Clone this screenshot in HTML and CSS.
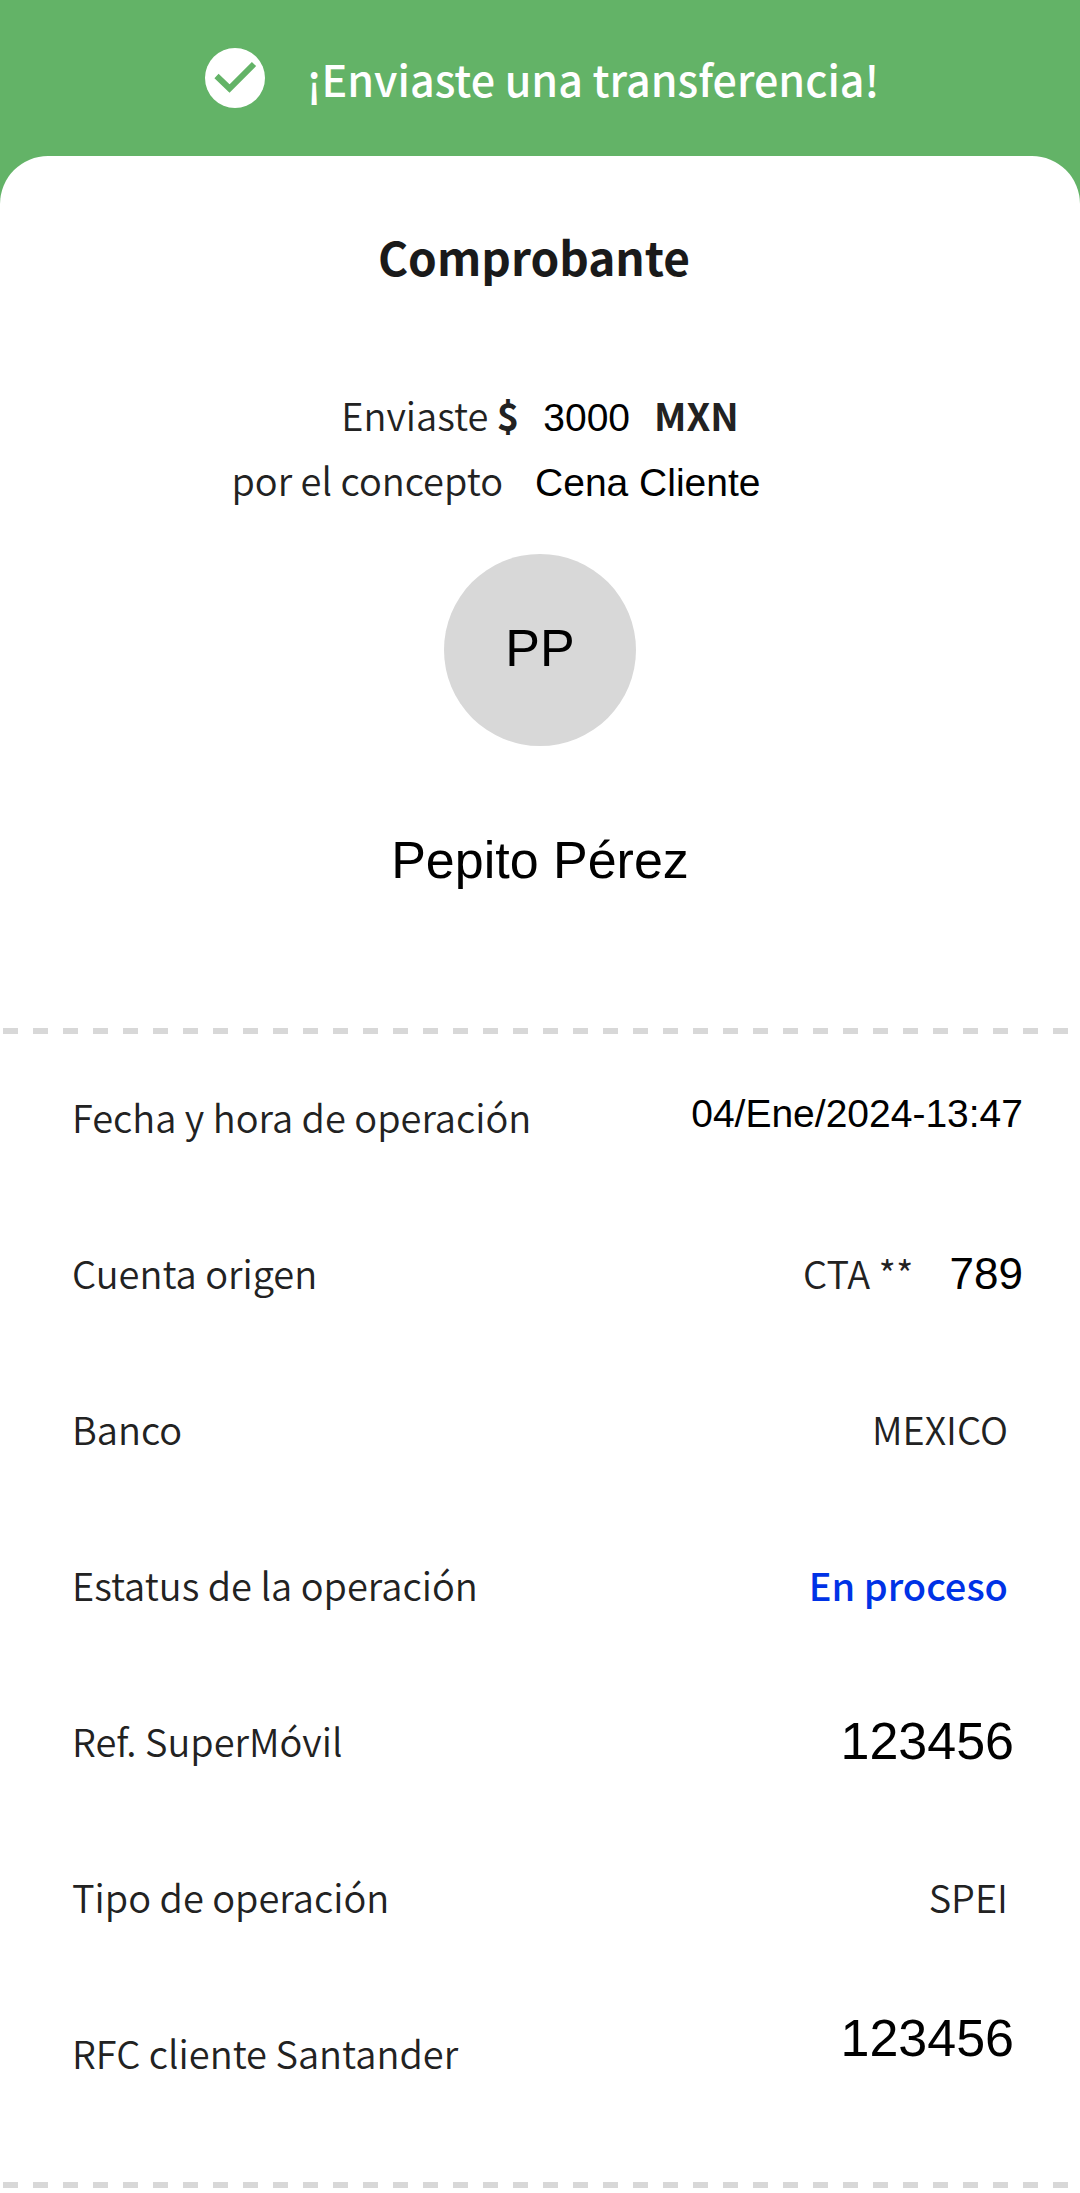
FILE: index.html
```html
<!DOCTYPE html>
<html lang="es">
<head>
  <meta charset="utf-8">
  <meta name="viewport" content="width=device-width, initial-scale=1">
  <title>Comprobante</title>
  <link rel="stylesheet" href="styles.css">
</head>
<body>
  <header class="banner">
    <svg class="banner-icon" viewBox="0 0 60 60" aria-hidden="true">
      <circle cx="30" cy="30" r="30" fill="#fff"/>
      <path d="M11.500 28L24.500 40.500L49 16" fill="none" stroke="#63b367" stroke-width="6"/>
    </svg>
    <p class="banner-text">¡Enviaste una transferencia!</p>
  </header>

  <main class="receipt">
    <h1 class="title">Comprobante</h1>

    <section class="summary">
      <p class="summary-line">
        <span>Enviaste <strong>$</strong></span>
        <span class="entry">3000</span>
        <strong>MXN</strong>
      </p>
      <p class="summary-line summary-concept">
        <span>por el concepto</span>
        <span class="entry">Cena Cliente</span>
      </p>
      <div class="avatar">PP</div>
      <p class="recipient">Pepito Pérez</p>
    </section>

    <hr class="divider">

    <dl class="details">
      <div class="row">
        <dt>Fecha y hora de operación</dt>
        <dd class="entry entry-raised">04/Ene/2024-13:47</dd>
      </div>
      <div class="row">
        <dt>Cuenta origen</dt>
        <dd class="account"><span>CTA **</span><span class="entry entry-medium">789</span></dd>
      </div>
      <div class="row">
        <dt>Banco</dt>
        <dd>MEXICO</dd>
      </div>
      <div class="row">
        <dt>Estatus de la operación</dt>
        <dd class="status">En proceso</dd>
      </div>
      <div class="row">
        <dt>Ref. SuperMóvil</dt>
        <dd class="entry entry-large">123456</dd>
      </div>
      <div class="row">
        <dt>Tipo de operación</dt>
        <dd>SPEI</dd>
      </div>
      <div class="row row-last">
        <dt>RFC cliente Santander</dt>
        <dd class="entry entry-large">123456</dd>
      </div>
    </dl>

    <hr class="divider">
  </main>
</body>
</html>
```
FILE: styles.css
```css
:root {
  --green: #63b367;
  --ink: #222;
  --grey: #d8d8d8;
  --blue: #0032e6;
}

* {
  box-sizing: border-box;
}

body {
  display: flex;
  flex-direction: column;
  min-height: 100vh;
  margin: 0;
  background: var(--green);
  color: var(--ink);
  font-family: "Noto Sans CJK SC", "Noto Sans", sans-serif;
  font-size: 38px;
  font-weight: 350;
  line-height: 62px;
}

h1, p, dl, dd {
  margin: 0;
}

strong {
  font-weight: 700;
}

.banner {
  display: flex;
  align-items: center;
  justify-content: center;
  gap: 42px;
  min-height: 156px;
  padding-left: 4px;
}

.banner-icon {
  width: 60px;
  height: 60px;
}

.banner-text {
  color: #fff;
  font-size: 43px;
  font-weight: 500;
}

.receipt {
  flex: 1;
  padding: 68px 0 2px;
  border-radius: 48px 48px 0 0;
  background: #fff;
}

.title {
  padding-right: 12px;
  color: #1a1a1a;
  font-size: 46px;
  font-weight: 700;
  line-height: 64px;
  text-align: center;
}

.summary {
  display: flex;
  flex-direction: column;
  align-items: center;
  margin-top: 96px;
}

.summary-line {
  display: flex;
  align-items: baseline;
  gap: 24px;
}

.summary-concept {
  gap: 32px;
  margin-right: 88px;
}

.entry {
  color: #000;
  font-family: "Liberation Sans", Arial, sans-serif;
  font-size: 39px;
  font-weight: 400;
}

.avatar {
  display: grid;
  place-items: center;
  width: 192px;
  height: 192px;
  margin-top: 40px;
  padding-bottom: 4px;
  border-radius: 50%;
  background: var(--grey);
  color: #000;
  font: 400 52px/64px "Liberation Sans", Arial, sans-serif;
}

.recipient {
  margin-top: 82px;
  color: #000;
  font: 400 52px/64px "Liberation Sans", Arial, sans-serif;
}

.divider {
  height: 6px;
  margin: 136px 0 0;
  border: 0;
  background: repeating-linear-gradient(90deg, transparent 0 3px, var(--grey) 3px 18px, transparent 18px 30px);
}

.details {
  padding: 5px 72px 0;
}

.details + .divider {
  margin-top: 51px;
}

.row {
  display: flex;
  align-items: center;
  justify-content: space-between;
  min-height: 156px;
}

.row .entry {
  margin-right: -15px;
}

.row .entry-raised {
  padding-bottom: 6px;
}

.row .entry-medium {
  font-size: 44px;
}

.row .entry-large {
  margin-right: -6px;
  font-size: 52px;
}

.row-last .entry {
  padding-bottom: 30px;
}

.account {
  display: flex;
  align-items: baseline;
  gap: 36px;
}

.status {
  color: var(--blue);
  font-weight: 500;
}
```
